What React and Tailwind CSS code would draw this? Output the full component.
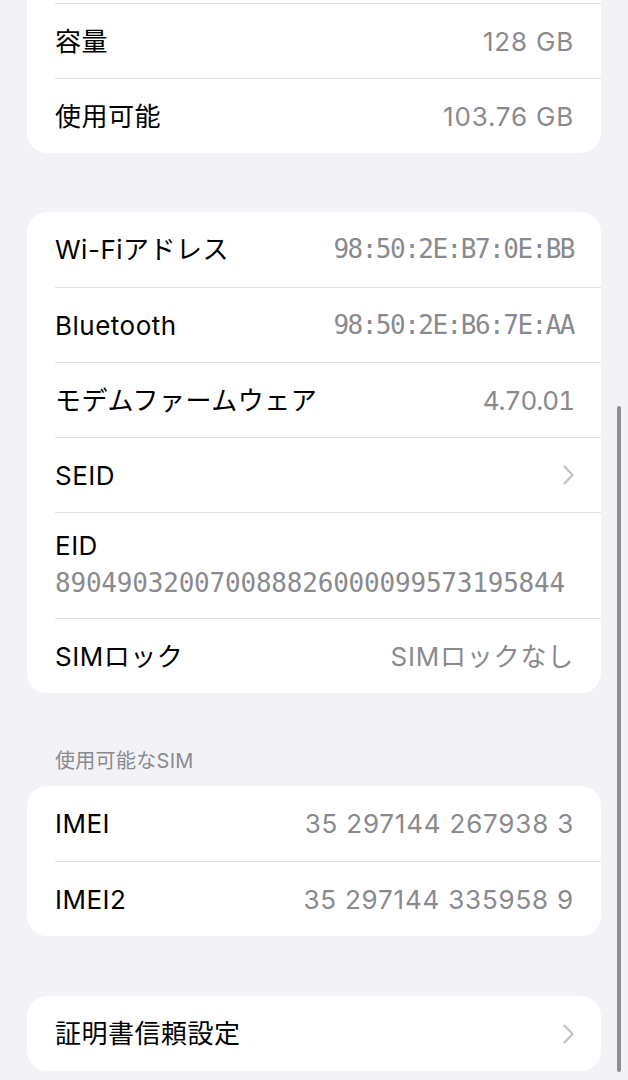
import React from "react";

const sans = "font-['Inter','Noto_Sans_CJK_JP',sans-serif]";
const mono = "font-['DejaVu_Sans_Mono','Noto_Sans_CJK_JP',monospace]";

function Chevron() {
  return (
    <svg width="11" height="20" viewBox="0 0 11 20" fill="none" className="shrink-0">
      <path d="M1.5 1.5 L9.5 10 L1.5 18.5" stroke="#c4c4c7" strokeWidth="2.4" strokeLinecap="round" strokeLinejoin="round" />
    </svg>
  );
}

function Row({ label, value, valueClass = "text-[26px] tracking-[0.8px]", chevron, first }) {
  return (
    <div className="pl-[28px]">
      <div className={`h-[75px] flex items-center justify-between pr-[27px] ${first ? "" : "border-t border-[#e2e2e6]"}`}>
        <span className="text-[26px] tracking-[0.5px] text-black">{label}</span>
        {value && <span className={`text-[#8a8a8e] ${valueClass}`}>{value}</span>}
        {chevron && <Chevron />}
      </div>
    </div>
  );
}

function Card({ children, className = "" }) {
  return <div className={`mx-[27px] bg-white rounded-[20px] overflow-hidden ${className}`}>{children}</div>;
}

export default function App() {
  return (
    <div className={`relative w-[628px] h-[1080px] overflow-hidden bg-[#f2f2f7] ${sans}`}>
      <Card className="-mt-[72px]">
        <Row label="" first />
        <Row label="容量" value="128 GB" />
        <Row label="使用可能" value="103.76 GB" />
      </Card>

      <Card className="mt-[59px]">
        <Row label="Wi-Fiアドレス" value="98:50:2E:B7:0E:BB" valueClass={`${mono} text-[26px] tracking-[-1.5px]`} first />
        <Row label="Bluetooth" value="98:50:2E:B6:7E:AA" valueClass={`${mono} text-[26px] tracking-[-1.5px]`} />
        <Row label="モデムファームウェア" value="4.70.01" valueClass="text-[26px] tabular-nums tracking-[-1px]" />
        <Row label="SEID" chevron />
        <div className="pl-[28px]">
          <div className="border-t border-[#e2e2e6] pt-[17px] pb-[19px] pr-[27px] flex flex-col gap-[5px]">
            <span className="text-[26px] leading-[32px] tracking-[0.5px] text-black">EID</span>
            <span className={`${mono} text-[26px] leading-[32px] tracking-[-0.2px] text-[#8a8a8e]`}>
              890490320070088826000099573195844
            </span>
          </div>
        </div>
        <Row label="SIMロック" value="SIMロックなし" />
      </Card>

      <div className="mt-[56px] mb-[13px] pl-[55px] h-[24px] leading-[24px] text-[20px] tracking-[0.3px] text-[#8a8a8e]">使用可能なSIM</div>

      <Card>
        <Row label="IMEI" value="35 297144 267938 3" first />
        <Row label="IMEI2" value="35 297144 335958 9" />
      </Card>

      <Card className="mt-[60px]">
        <Row label="証明書信頼設定" chevron first />
      </Card>

      <div className="absolute left-[617px] top-[406px] w-[4px] h-[666px] rounded-full bg-[#8e8e93]" />
    </div>
  );
}
